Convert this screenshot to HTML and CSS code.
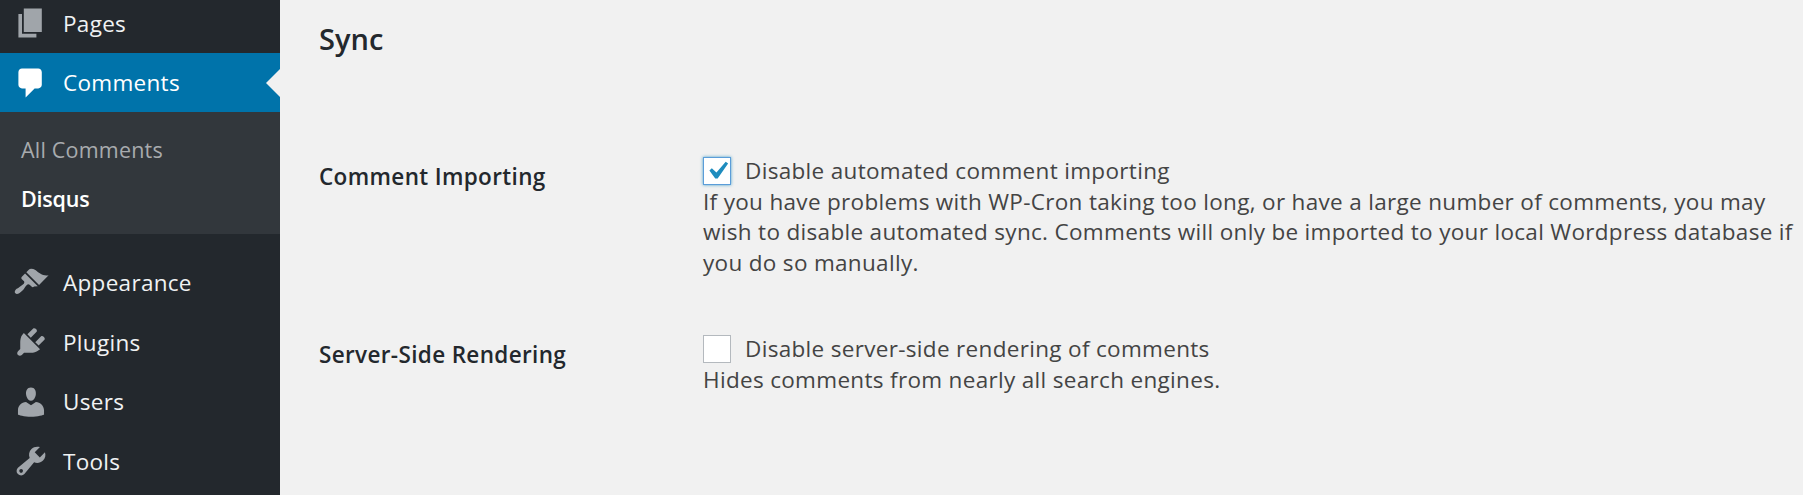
FILE: index.html
```html
<!DOCTYPE html>
<html lang="en">
<head>
<meta charset="utf-8">
<title>Disqus Sync</title>
<link rel="stylesheet" href="styles.css">
</head>
<body>
<div class="layout">
  <nav class="sidebar">
    <a class="item first"><svg class="icon" viewBox="0 0 20 20"><path d="M6 15V2h10v13H6zm-1 1h8v2H3V5h2v11z"/></svg><span>Pages</span></a>
    <a class="item active"><svg class="icon" viewBox="0 0 20 20"><path d="M5 2h9c1.1 0 2 .9 2 2v7c0 1.1-.9 2-2 2h-2l-5 5v-5H5c-1.1 0-2-.9-2-2V4c0-1.1.9-2 2-2z"/></svg><span>Comments</span><i class="arrow"></i></a>
    <div class="submenu">
      <a class="subitem">All Comments</a>
      <a class="subitem current">Disqus</a>
    </div>
    <a class="item"><svg class="icon" viewBox="0 0 20 20"><path d="M14.48 11.06L7.41 3.99l1.5-1.5c.5-.56 2.3-.47 3.51.32 1.21.8 1.43 1.28 2.91 2.1 1.18.64 2.45 1.26 4.45.85zm-.71.71L6.7 4.7 4.93 6.47c-.39.39-.39 1.02 0 1.41l1.06 1.06c.39.39.39 1.03 0 1.42-.6.6-1.43 1.11-2.21 1.69-.35.26-.7.53-1.01.84C1.43 13.23.5 14.93 1.33 15.76c.84.84 2.6-.14 3.94-1.6.33-.3.59-.66.85-1.01.57-.78 1.08-1.61 1.69-2.21.38-.39 1.02-.39 1.41 0l1.06 1.06c.39.39 1.02.39 1.41 0z"/></svg><span>Appearance</span></a>
    <a class="item"><svg class="icon" viewBox="0 0 20 20"><path d="M13.11 4.36L9.87 7.6 8 5.73l3.24-3.24c.35-.34 1.05-.2 1.56.32.52.51.66 1.21.31 1.55zm-8 1.77l.91-1.12 9.01 9.01-1.19.84c-.71.71-2.63 1.16-3.82 1.16H6.14L4.9 17.26c-.59.59-1.54.59-2.12 0-.59-.58-.59-1.53 0-2.12l1.24-1.24v-3.88c0-1.13.4-3.19 1.09-3.89zm7.26 3.97l3.24-3.24c.34-.35 1.04-.21 1.55.31.52.51.66 1.21.31 1.55l-3.24 3.25z"/></svg><span>Plugins</span></a>
    <a class="item"><svg class="icon" viewBox="0 0 20 20"><path d="M10 9.25c-2.27 0-2.73-3.44-2.73-3.44C7 4.02 7.82 2 9.97 2c2.16 0 2.98 2.02 2.71 3.81 0 0-.41 3.44-2.68 3.44zm0 2.57L12.72 10c2.39 0 4.52 2.33 4.52 4.53v2.49s-3.65 1.13-7.24 1.13c-3.65 0-7.24-1.13-7.24-1.13v-2.49c0-2.25 1.94-4.48 4.47-4.48z"/></svg><span>Users</span></a>
    <a class="item"><svg class="icon" viewBox="0 0 20 20"><path d="M16.68 9.77c-1.34 1.34-3.3 1.67-4.95.99l-5.41 6.52c-.99.99-2.59.99-3.58 0s-.99-2.59 0-3.57l6.52-5.42c-.68-1.65-.35-3.61.99-4.95 1.28-1.28 3.12-1.62 4.72-1.06l-2.89 2.89 2.82 2.82 2.86-2.87c.53 1.58.18 3.39-1.08 4.65zM3.81 16.21c.4.39 1.04.39 1.43 0 .4-.4.4-1.04 0-1.43-.39-.4-1.03-.4-1.43 0-.39.39-.39 1.03 0 1.43z"/></svg><span>Tools</span></a>
  </nav>
  <main class="content">
    <h2 class="title">Sync</h2>
    <div class="form">
      <div class="label">Comment Importing</div>
      <div class="field">
        <div class="check-line"><span class="box focused"><svg class="tick" viewBox="0 0 20 20"><path d="M14.83 4.89l1.34.94-5.81 8.38H9.02L5.78 9.67l1.34-1.25 2.57 2.4z"/></svg></span>Disable automated comment importing</div>
        <p class="desc">If you have problems with WP-Cron taking too long, or have a large number of comments, you may<br>wish to disable automated sync. Comments will only be imported to your local Wordpress database if<br>you do so manually.</p>
      </div>
      <div class="label">Server-Side Rendering</div>
      <div class="field">
        <div class="check-line"><span class="box"></span>Disable server-side rendering of comments</div>
        <p class="desc">Hides comments from nearly all search engines.</p>
      </div>
    </div>
  </main>
</div>
</body>
</html>
```
FILE: styles.css
```css
* { box-sizing: border-box; }
html, body { margin: 0; height: 100%; }
body {
  background: #f1f1f1;
  font-family: "Open Sans", "Noto Sans", sans-serif;
  overflow: hidden;
}
.layout { display: flex; height: 495px; }
.sidebar {
  width: 280px;
  flex: none;
  background: #23282d;
  display: flex;
  flex-direction: column;
  overflow: hidden;
}
.item {
  display: flex;
  align-items: center;
  height: 59.5px;
  flex: none;
  padding-left: 13px;
  gap: 14px;
  color: #f0f2f3;
  font-size: 22.5px;
  letter-spacing: 0.3px;
  position: relative;
}
.item.first { margin-top: -7px; height: 60px; }
.icon { width: 36px; height: 36px; fill: #a0a5aa; flex: none; }
.item.active { background: #0073aa; color: #fff; height: 59px; }
.item.active .icon { fill: #fff; }
.arrow {
  position: absolute;
  right: 0;
  top: 50%;
  margin-top: -14px;
  border: 14px solid transparent;
  border-left-width: 0;
  border-right-color: #f1f1f1;
}
.submenu {
  background: #32373c;
  height: 122px;
  padding-top: 14px;
  margin-bottom: 19px;
  flex: none;
}
.subitem {
  display: block;
  padding-left: 21px;
  height: 48.5px;
  line-height: 48px;
  font-size: 21.5px;
  letter-spacing: 0.2px;
  color: #a8abae;
}
.subitem.current { color: #fff; font-weight: 600; letter-spacing: -0.2px; }
.content { flex: 1; padding-left: 39px; color: #23282d; }
.title {
  margin: 0;
  padding-top: 18px;
  font-size: 29px;
  line-height: 42px;
  font-weight: 600;
  letter-spacing: 0;
}
.form {
  display: grid;
  grid-template-columns: 384px 1fr;
  margin-top: 96px;
  row-gap: 56px;
}
.label {
  font-size: 22.5px;
  font-weight: 600;
  line-height: 30px;
  letter-spacing: 0.35px;
  padding-top: 6px;
}
.field { font-size: 22.5px; line-height: 30.5px; color: #444; letter-spacing: 0.32px; }
.check-line { display: flex; align-items: center; height: 30.5px; }
.box {
  width: 28px;
  height: 28px;
  margin-right: 14px;
  background: #fff;
  border: 1px solid #b4b9be;
  display: flex;
  align-items: center;
  justify-content: center;
}
.box.focused { border-color: #5b9dd9; box-shadow: 0 0 3px rgba(30, 140, 190, .8); }
.tick { width: 36px; height: 36px; fill: #1e8cbe; flex: none; }
.desc { margin: 0; }
```
